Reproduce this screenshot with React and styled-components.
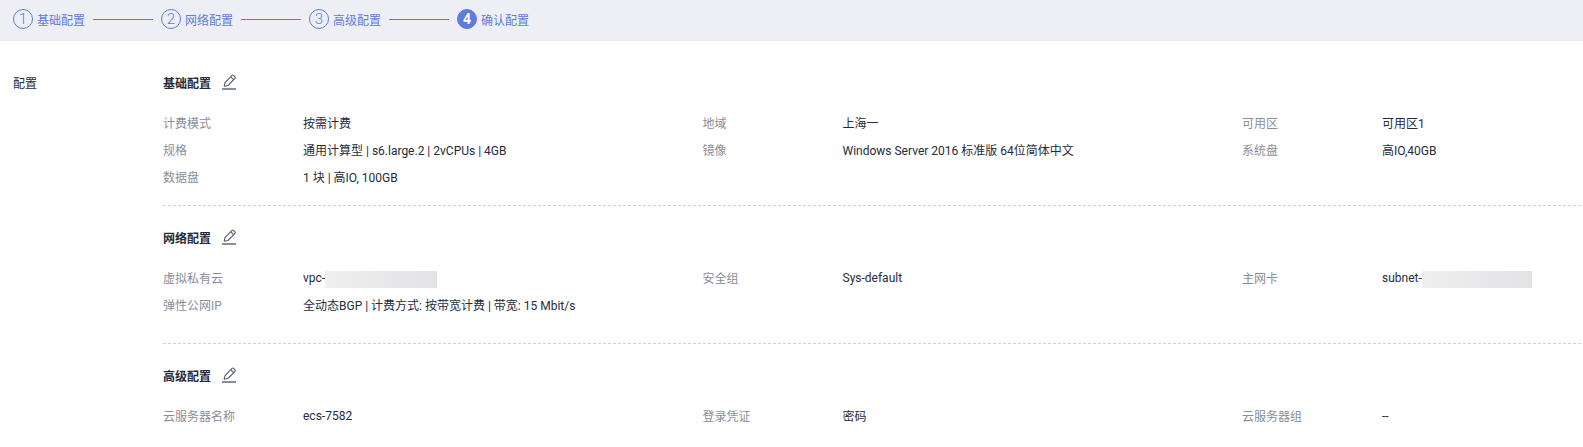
import React from "react";
import styled, { createGlobalStyle } from "styled-components";

const GlobalStyle = createGlobalStyle`
  html, body {
    margin: 0;
    padding: 0;
    background: #fff;
    overflow: hidden;
  }
  body {
    font-family: Roboto, "Noto Sans CJK SC", sans-serif;
    font-size: 12px;
    color: #252b3a;
  }
`;

const Page = styled.div`
  width: 1583px;
  height: 447px;
  overflow: hidden;
`;

const StepBar = styled.div`
  display: flex;
  align-items: center;
  box-sizing: border-box;
  height: 41px;
  padding: 0 0 2px 13px;
  background: #eeeff5;
  border-bottom: 1px solid #e9eaf0;
`;

const Step = styled.div`
  display: flex;
  align-items: center;
  gap: 4px;
  color: #5e7ce0;
`;

const StepNum = styled.span`
  width: 20px;
  height: 20px;
  box-sizing: border-box;
  border-radius: 50%;
  border: 1px solid #5e7ce0;
  display: flex;
  align-items: center;
  justify-content: center;
  font-size: ${(p) => (p.$active ? 14 : 15)}px;
  font-weight: ${(p) => (p.$active ? 700 : 300)};
  background: ${(p) => (p.$active ? "#5e7ce0" : "transparent")};
  color: ${(p) => (p.$active ? "#fff" : "#5e7ce0")};
`;

const StepLine = styled.div`
  width: 60px;
  height: 1px;
  margin: 0 8px;
  background: #5e7ce0;
`;

const Body = styled.div`
  display: flex;
  padding: 27px 2px 0 0;
`;

const SideLabel = styled.div`
  width: 163px;
  box-sizing: border-box;
  padding: 8px 0 0 13px;
  flex-shrink: 0;
  line-height: 17px;
  color: #252b3a;
`;

const Sections = styled.div`
  flex: 1;
`;

const Section = styled.section`
  border-bottom: ${(p) => (p.$last ? "none" : "1px dashed #cfd0d3")};
  padding-bottom: ${(p) => (p.$last ? 0 : p.$pb)}px;
  margin-bottom: ${(p) => (p.$last ? 0 : 17)}px;
`;

const Heading = styled.div`
  display: flex;
  align-items: center;
  gap: 11px;
  height: 28px;
  margin-bottom: 13px;
  font-weight: 700;
  color: #252b3a;
`;

const Grid = styled.div`
  display: grid;
  grid-template-columns: 539.5px 539.5px 1fr;
  grid-auto-rows: 27px;
`;

const Item = styled.div`
  display: flex;
  align-items: center;
`;

const Label = styled.span`
  width: 140px;
  flex-shrink: 0;
  color: #8a8e99;
`;

const Value = styled.span`
  display: inline-flex;
  align-items: center;
  color: #252b3a;
  white-space: nowrap;
`;

const Masked = styled.span`
  display: inline-block;
  width: ${(p) => p.$w}px;
  height: 17px;
  margin-top: 3px;
  background: linear-gradient(90deg, #efeff0, #e3e3e5);
`;

function Pencil() {
  return (
    <svg width="14" height="16" viewBox="0 0 14 16" fill="none" stroke="#575d6c" strokeWidth="1.1">
      <path d="M2.2 12.2 L3 8.6 L10 1.4 Q10.8 .7 11.6 1.4 L13 2.8 Q13.7 3.6 13 4.4 L5.9 11.5 Z" strokeLinejoin="round" />
      <path d="M8.8 2.8 L11.7 5.7" />
      <path d="M0 15 H14" strokeWidth="1.4" />
    </svg>
  );
}

const steps = ["基础配置", "网络配置", "高级配置", "确认配置"];

const basicItems = [
  ["计费模式", "按需计费"],
  ["地域", "上海一"],
  ["可用区", "可用区1"],
  ["规格", "通用计算型 | s6.large.2 | 2vCPUs | 4GB"],
  ["镜像", "Windows Server 2016 标准版 64位简体中文"],
  ["系统盘", "高IO,40GB"],
  ["数据盘", "1 块 | 高IO, 100GB"],
];

const networkItems = [
  ["虚拟私有云", "vpc-", 112],
  ["安全组", "Sys-default"],
  ["主网卡", "subnet-", 110],
  ["弹性公网IP", "全动态BGP | 计费方式: 按带宽计费 | 带宽: 15 Mbit/s"],
];

const advancedItems = [
  ["云服务器名称", "ecs-7582"],
  ["登录凭证", "密码"],
  ["云服务器组", "--"],
];

function Items({ items }) {
  return (
    <Grid>
      {items.map(([label, value, masked]) => (
        <Item key={label}>
          <Label>{label}</Label>
          <Value>
            {value}
            {masked && <Masked $w={masked} />}
          </Value>
        </Item>
      ))}
    </Grid>
  );
}

export default function App() {
  return (
    <Page>
      <GlobalStyle />
      <StepBar>
        {steps.map((name, i) => (
          <React.Fragment key={name}>
            <Step>
              <StepNum $active={i === 3}>{i + 1}</StepNum>
              {name}
            </Step>
            {i < 3 && <StepLine />}
          </React.Fragment>
        ))}
      </StepBar>
      <Body>
        <SideLabel>配置</SideLabel>
        <Sections>
          <Section $pb={15}>
            <Heading>
              基础配置 <Pencil />
            </Heading>
            <Items items={basicItems} />
          </Section>
          <Section $pb={25}>
            <Heading>
              网络配置 <Pencil />
            </Heading>
            <Items items={networkItems} />
          </Section>
          <Section $last>
            <Heading>
              高级配置 <Pencil />
            </Heading>
            <Items items={advancedItems} />
          </Section>
        </Sections>
      </Body>
    </Page>
  );
}
